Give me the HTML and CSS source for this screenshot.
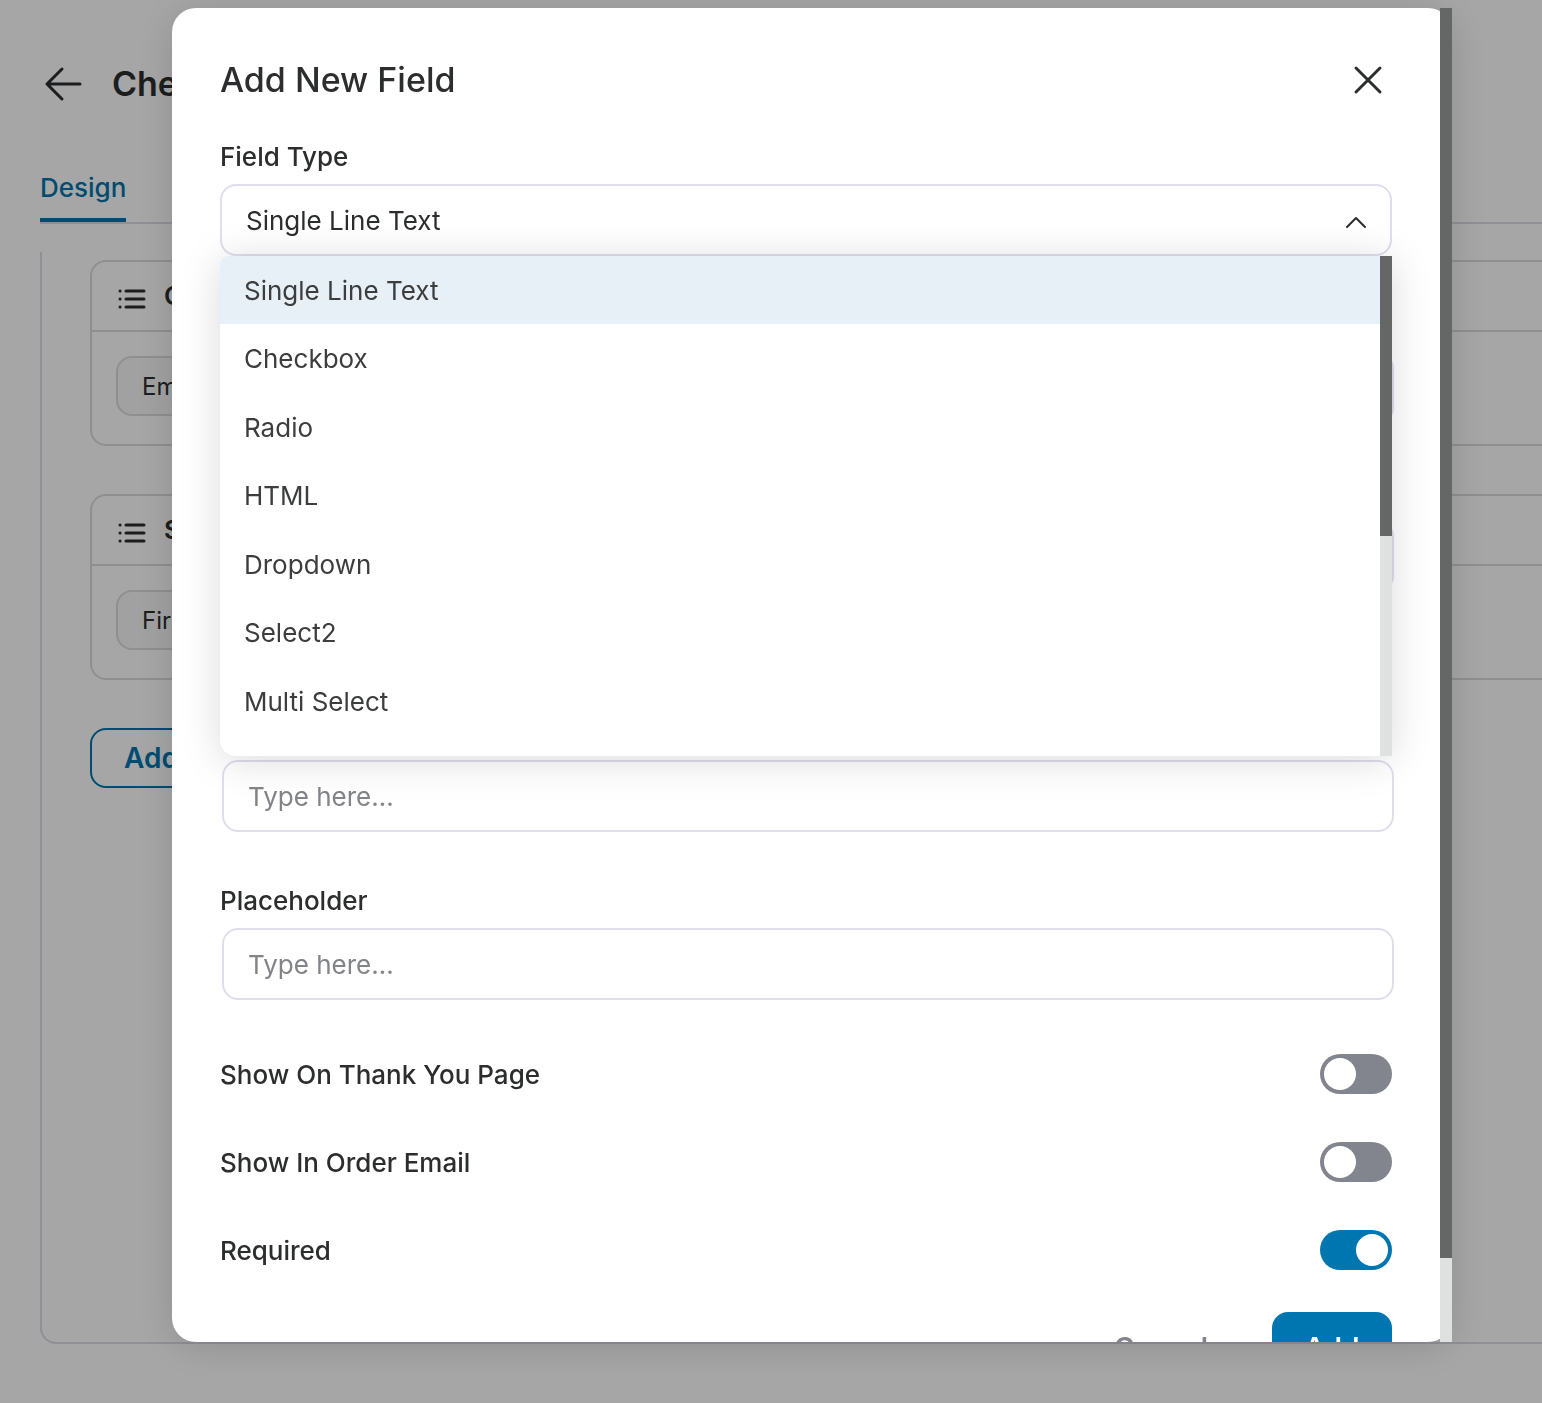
FILE: index.html
```html
<!DOCTYPE html>
<html lang="en">
<head>
    <meta charset="UTF-8">
    <meta name="viewport" content="width=device-width, initial-scale=1.0">
    <title>Checkout - Add New Field</title>
    <link rel="stylesheet" href="styles.css">
</head>
<body>
    <div class="page">
        <header class="page-header">
            <a href="#" class="back-link" aria-label="Back">
                <svg width="40" height="40" viewBox="0 0 40 40" fill="none" stroke="currentColor" stroke-width="3" stroke-linecap="round" stroke-linejoin="round">
                    <path d="M36 20H3M18 5L3 20l15 15"/>
                </svg>
            </a>
            <h1>Checkout</h1>
        </header>

        <nav class="tabs">
            <a href="#" class="tab active">Design</a>
        </nav>

        <main class="panel">
            <section class="card">
                <h2 class="card-header">
                    <svg class="list-icon" width="28" height="24" viewBox="0 0 28 24" fill="none" stroke="currentColor" stroke-width="3" stroke-linecap="round">
                        <path d="M8 4h18M8 12h18M8 20h18M2 4h.1M2 12h.1M2 20h.1"/>
                    </svg>
                    Contact
                </h2>
                <div class="card-body">
                    <button type="button" class="chip">Email</button>
                </div>
            </section>

            <section class="card">
                <h2 class="card-header">
                    <svg class="list-icon" width="28" height="24" viewBox="0 0 28 24" fill="none" stroke="currentColor" stroke-width="3" stroke-linecap="round">
                        <path d="M8 4h18M8 12h18M8 20h18M2 4h.1M2 12h.1M2 20h.1"/>
                    </svg>
                    Shipping
                </h2>
                <div class="card-body">
                    <button type="button" class="chip">First Name</button>
                </div>
            </section>

            <button type="button" class="btn-outline">Add Section</button>
        </main>
    </div>

    <div class="overlay">
        <div class="modal" role="dialog" aria-labelledby="modal-title">
            <form class="modal-body">
                <div class="modal-header">
                    <h2 id="modal-title">Add New Field</h2>
                    <button type="button" class="btn-close" aria-label="Close">
                        <svg width="48" height="48" viewBox="0 0 48 48" fill="none" stroke="currentColor" stroke-width="3" stroke-linecap="round">
                            <path d="M12 12l24 24M36 12L12 36"/>
                        </svg>
                    </button>
                </div>

                <div class="field">
                    <label for="field-type">Field Type</label>
                    <div class="select-wrap">
                        <select id="field-type">
                            <option>Single Line Text</option>
                        </select>
                        <svg class="chevron" width="24" height="16" viewBox="0 0 24 16" fill="none" stroke="currentColor" stroke-width="2" stroke-linecap="round" stroke-linejoin="round">
                            <path d="M3 13l9-9 9 9"/>
                        </svg>
                        <div class="menu">
                            <ul role="listbox" aria-label="Field types">
                                <li role="option" aria-selected="true" class="selected">Single Line Text</li>
                                <li role="option">Checkbox</li>
                                <li role="option">Radio</li>
                                <li role="option">HTML</li>
                                <li role="option">Dropdown</li>
                                <li role="option">Select2</li>
                                <li role="option">Multi Select</li>
                            </ul>
                            <div class="scrollbar"><div class="menu-thumb"></div></div>
                        </div>
                    </div>
                </div>

                <div class="field">
                    <label for="label">Label</label>
                    <input type="text" id="label">
                </div>

                <div class="field">
                    <label for="field-id">Field ID</label>
                    <input type="text" id="field-id">
                    <p class="hint">Field ID (Order Meta Key)</p>
                </div>

                <div class="field">
                    <label for="default-value">Default</label>
                    <input type="text" id="default-value" placeholder="Type here...">
                </div>

                <div class="field">
                    <label for="placeholder">Placeholder</label>
                    <input type="text" id="placeholder" placeholder="Type here...">
                </div>

                <div class="toggles">
                    <div class="toggle-row">
                        <label for="thank-you">Show On Thank You Page</label>
                        <input type="checkbox" class="toggle" id="thank-you">
                    </div>
                    <div class="toggle-row">
                        <label for="order-email">Show In Order Email</label>
                        <input type="checkbox" class="toggle" id="order-email">
                    </div>
                    <div class="toggle-row">
                        <label for="required">Required</label>
                        <input type="checkbox" class="toggle" id="required" checked>
                    </div>
                </div>

                <div class="modal-footer">
                    <button type="button" class="btn-cancel">Cancel</button>
                    <button type="submit" class="btn-add">Add</button>
                </div>
            </form>
            <div class="scrollbar"><div class="modal-thumb"></div></div>
        </div>
    </div>
</body>
</html>
```
FILE: styles.css
```css
* {
    box-sizing: border-box;
}
body {
    margin: 0;
    font-family: Inter, "Liberation Sans", sans-serif;
    font-size: 26px;
    line-height: 32px;
    color: #2c2d2e;
    background: #fff;
    overflow: hidden;
}
h1, h2, p, ul {
    margin: 0;
    padding: 0;
}
button, input, select {
    font-family: inherit;
    color: inherit;
}
button {
    cursor: pointer;
}

/* page behind the modal */
.page {
    display: flex;
    flex-direction: column;
    height: 100vh;
    padding: 60px 0 59px 40px;
}
.page-header {
    display: flex;
    align-items: center;
    gap: 28px;
    padding-left: 4px;
    height: 48px;
}
.page-header h1 {
    font-size: 34px;
    font-weight: 600;
}
.back-link {
    display: flex;
    color: inherit;
}
.tabs {
    display: flex;
    margin-top: 64px;
    border-bottom: 2px solid #dcdce6;
}
.tab {
    padding-bottom: 14px;
    border-bottom: 4px solid #0076b0;
    color: #0076b0;
    font-weight: 500;
    text-decoration: none;
}
.panel {
    flex: 1;
    margin-top: 28px;
    padding: 8px 0 0 48px;
    border: 2px solid #dcdce6;
    border-top: none;
    border-right: none;
    border-bottom-left-radius: 16px;
}
.card {
    margin-bottom: 48px;
    border: 2px solid #dcdce0;
    border-right: none;
    border-radius: 16px 0 0 16px;
}
.card-header {
    display: flex;
    align-items: center;
    gap: 18px;
    height: 70px;
    padding-left: 26px;
    border-bottom: 2px solid #dcdce0;
    font-size: 26px;
    font-weight: 600;
}
.list-icon {
    margin-top: 6px;
}
.card-body {
    display: flex;
    padding: 24px;
    height: 112px;
}
.chip {
    height: 60px;
    padding: 0 24px;
    border: 2px solid #dcdce0;
    border-radius: 16px;
    background: #f8f8f8;
    font-size: 24px;
}
.btn-outline {
    height: 60px;
    padding: 0 32px;
    border: 2px solid #0076b0;
    border-radius: 16px;
    background: none;
    color: #0076b0;
    font-size: 28px;
    font-weight: 600;
}

/* modal */
.overlay {
    position: fixed;
    inset: 0;
    display: flex;
    padding: 8px 90px 61px 172px;
    background: rgba(0,0,0,0.35);
}
.modal {
    flex: 1;
    display: flex;
    min-height: 0;
    border-radius: 24px;
    background: #fff;
    box-shadow: 0 4px 40px rgba(0,0,0,0.15);
}
.modal-body {
    flex: 1;
    padding: 48px;
    overflow: hidden;
}
.modal-header {
    display: flex;
    justify-content: space-between;
    align-items: center;
    height: 48px;
    margin-bottom: 36px;
}
.modal-header h2 {
    font-size: 34px;
    font-weight: 500;
}
.btn-close {
    display: flex;
    margin: 0;
    padding: 0;
    border: none;
    background: none;
}
.scrollbar {
    flex: none;
    width: 12px;
    background: #dfe0e0;
}
.modal-thumb {
    height: calc(100% - 84px);
    background: #656766;
}
.menu-thumb {
    height: 56%;
    background: #656766;
}

/* fields */
.field {
    margin-bottom: 52px;
}
label {
    display: block;
    font-weight: 500;
}
.field label {
    margin-bottom: 10px;
    line-height: 34px;
}
.field input,
.field select {
    display: block;
    width: 100%;
    height: 72px;
    padding: 0 24px;
    border: 2px solid #dedeed;
    border-radius: 16px;
    background: #fff;
    font-size: 26px;
    appearance: none;
}
.field input {
    margin-left: 2px;
}
.field input::placeholder {
    color: #828488;
}
.hint {
    height: 64px;
    margin-top: 8px;
    font-size: 24px;
}
.select-wrap {
    position: relative;
}
.chevron {
    position: absolute;
    right: 24px;
    top: 30px;
}
.menu {
    position: absolute;
    z-index: 1;
    top: 100%;
    left: 0;
    right: 0;
    display: flex;
    height: 500px;
    border-radius: 8px 0 16px 16px;
    background: #fff;
    box-shadow: 0 4px 40px rgba(0,0,0,0.15);
}
.menu ul {
    flex: 1;
    display: flex;
    flex-direction: column;
    padding-bottom: 21px;
    list-style: none;
    color: #3c3d3e;
}
.menu li {
    flex: 1;
    min-height: 0;
    padding: 0 24px;
    line-height: 70px;
}
.menu li.selected {
    border-radius: 8px 0 0 0;
    background: #e7f0f7;
}

/* toggles */
.toggles {
    display: flex;
    flex-direction: column;
    gap: 48px;
    margin-bottom: 42px;
    padding-top: 2px;
}
.toggle-row {
    display: flex;
    justify-content: space-between;
    align-items: center;
}
.toggle-row label {
    padding-top: 2px;
}
.toggle {
    appearance: none;
    width: 72px;
    height: 40px;
    margin: 0;
    padding: 4px;
    border-radius: 20px;
    background: #82858e;
}
.toggle::before {
    content: "";
    display: block;
    width: 32px;
    height: 32px;
    border-radius: 50%;
    background: #fff;
}
.toggle:checked {
    background: #0076b0;
}
.toggle:checked::before {
    margin-left: auto;
}

.modal-footer {
    display: flex;
    justify-content: flex-end;
    gap: 32px;
}
.modal-footer button {
    height: 72px;
    padding: 0 32px;
    border: none;
    border-radius: 16px;
    background: none;
    font-size: 28px;
    font-weight: 600;
}
.modal-footer .btn-cancel {
    color: #82858e;
}
.modal-footer .btn-add {
    width: 120px;
    background: #0076b0;
    color: #fff;
}
```
